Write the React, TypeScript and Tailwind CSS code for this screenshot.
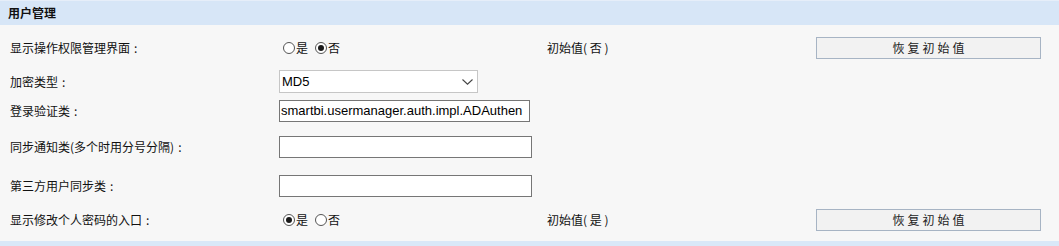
import React from "react";

const cjk = "font-['Noto_Sans_CJK_SC','Noto_Sans',sans-serif]";
const latin = "font-['Liberation_Sans',Arial,sans-serif]";

function Radio({ checked, label }: { checked: boolean; label: string }) {
    return (
        <span className="inline-flex items-center">
            <span className="flex items-center justify-center w-[12px] h-[12px] rounded-full border border-[#555] bg-white">
                {checked && <span className="block w-[6px] h-[6px] rounded-full bg-[#1a1a1a]" />}
            </span>
            <span className="ml-[1px] text-[12px] text-[#111]">{label}</span>
        </span>
    );
}

function ResetButton() {
    return (
        <button className={`w-[225px] h-[22px] border border-[#a7b4c4] bg-[#f2f2f2] text-[12px] text-[#222] tracking-[3px] pl-[3px] ${cjk}`}>
            恢复初始值
        </button>
    );
}

interface RowProps {
    label: string;
    height: string;
    children?: React.ReactNode;
    initial?: string;
}

function Row({ label, height, children, initial }: RowProps) {
    return (
        <div className={`flex items-center ${height}`}>
            <div className="w-[279px] pl-[10px] text-[12px] text-[#111] whitespace-nowrap">
                {label}
                <span className="ml-[4px]">:</span>
            </div>
            <div className="w-[268px] flex items-center">{children}</div>
            {initial && (
                <>
                    <div className="w-[269px] text-[12px] text-[#111]">{initial}</div>
                    <ResetButton />
                </>
            )}
        </div>
    );
}

export default function App() {
    return (
        <div className={`w-[1059px] h-[246px] bg-[#f7f7f7] overflow-hidden ${cjk}`}>
            <div className="h-[25px] bg-[#d7e6f7] border-t border-[#e6eef9] flex items-center pl-[8px]">
                <span className="text-[12px] font-bold text-[#111]">用户管理</span>
            </div>

            <Row label="显示操作权限管理界面" height="h-[45px]" initial="初始值( 否 )">
                <span className="ml-[4px] flex items-center gap-[7px]">
                    <Radio checked={false} label="是" />
                    <Radio checked label="否" />
                </span>
            </Row>

            <Row label="加密类型" height="h-[23px]">
                <div className={`w-[199px] h-[23px] border border-[#c6c6c6] bg-white flex items-center justify-between pl-[2px] pr-[4px] text-[13px] text-black ${latin}`}>
                    <span>MD5</span>
                    <svg width="11" height="6" viewBox="0 0 11 6" fill="none">
                        <path d="M0.5 0.5 L5.5 5.2 L10.5 0.5" stroke="#444" strokeWidth="1.1" />
                    </svg>
                </div>
            </Row>

            <Row label="登录验证类" height="h-[36px]">
                <div className={`w-[251px] h-[22px] border border-[#767676] bg-white flex items-center pl-[1px] text-[13px] text-black overflow-hidden whitespace-nowrap ${latin}`}>
                    smartbi.usermanager.auth.impl.ADAuthen
                </div>
            </Row>

            <Row label="同步通知类(多个时用分号分隔)" height="h-[35px]">
                <div className="w-[253px] h-[22px] border border-[#767676] bg-white" />
            </Row>

            <Row label="第三方用户同步类" height="h-[43px]">
                <div className="w-[253px] h-[22px] border border-[#767676] bg-white" />
            </Row>

            <Row label="显示修改个人密码的入口" height="h-[26px]" initial="初始值( 是 )">
                <span className="ml-[4px] flex items-center gap-[7px]">
                    <Radio checked label="是" />
                    <Radio checked={false} label="否" />
                </span>
            </Row>

            <div className="h-[8px]" />
            <div className="h-[5px] bg-[#d9e8f8]" />
        </div>
    );
}
